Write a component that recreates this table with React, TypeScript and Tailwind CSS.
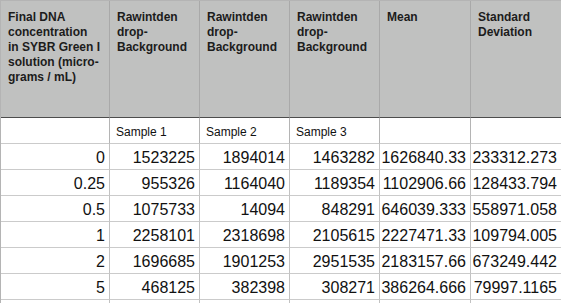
import React from "react";

const headers: string[][] = [
  ["Final DNA", "concentration", "in SYBR Green I", "solution (micro-", "grams / mL)"],
  ["Rawintden", "drop-", "Background"],
  ["Rawintden", "drop-", "Background"],
  ["Rawintden", "drop-", "Background"],
  ["Mean"],
  ["Standard", "Deviation"],
];

const samples = ["", "Sample 1", "Sample 2", "Sample 3", "", ""];

const rows: string[][] = [
  ["0", "1523225", "1894014", "1463282", "1626840.33", "233312.273"],
  ["0.25", "955326", "1164040", "1189354", "1102906.66", "128433.794"],
  ["0.5", "1075733", "14094", "848291", "646039.333", "558971.058"],
  ["1", "2258101", "2318698", "2105615", "2227471.33", "109794.005"],
  ["2", "1696685", "1901253", "2951535", "2183157.66", "673249.442"],
  ["5", "468125", "382398", "308271", "386264.666", "79997.1165"],
];

export default function App() {
  return (
    <div className="w-[561px] h-[303px] overflow-hidden bg-white font-['Liberation_Sans',Arial,sans-serif] text-[#111]">
      <div className="grid w-max grid-cols-[109px_90px_90px_90px_91px_91px] border-l border-t border-[#b4b4b4]">
        {/* header */}
        {headers.map((lines, i) => (
          <div
            key={`h${i}`}
            className="h-[117px] bg-[#c0c1c0] border-r border-r-[#a9a9a9] border-b border-b-[#4d4d4d] pl-[7px] pt-[9px] text-[12px] leading-[15px] font-bold text-[#1c1c1c]"
          >
            {lines.map((l, j) => (
              <div key={j} className="whitespace-nowrap">
                {l}
              </div>
            ))}
          </div>
        ))}
        {/* sample row */}
        {samples.map((s, i) => (
          <div
            key={`s${i}`}
            className="h-[26px] border-r border-r-[#b4b4b4] border-b border-b-[#cbcbcb] pl-[6px] flex items-center pt-[2px] text-[12px] whitespace-nowrap"
          >
            {s}
          </div>
        ))}
        {/* data rows */}
        {rows.map((r, ri) =>
          r.map((v, ci) => (
            <div
              key={`r${ri}c${ci}`}
              className="h-[26px] border-r border-r-[#c2c2c2] border-b border-b-[#cbcbcb] pr-[4px] flex items-center justify-end pt-[2px] text-[16px] whitespace-nowrap"
            >
              {v}
            </div>
          ))
        )}
        {samples.map((_, i) => (
          <div key={`e${i}`} className="h-[26px] border-r border-r-[#c2c2c2]" />
        ))}
      </div>
    </div>
  );
}
